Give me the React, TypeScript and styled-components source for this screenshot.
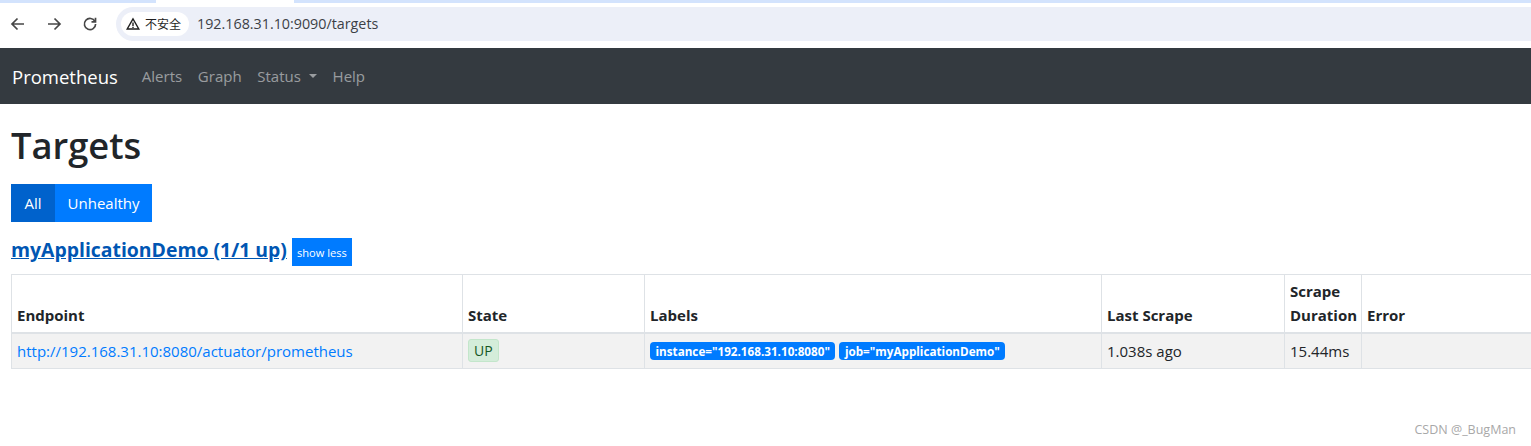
import React from "react";
import styled, { createGlobalStyle } from "styled-components";

const GlobalStyle = createGlobalStyle`
  html, body {
    margin: 0;
    padding: 0;
    background: #fff;
  }
  body {
    font-family: "Open Sans", "Noto Sans", "Liberation Sans", sans-serif;
    color: #212529;
    overflow: hidden;
  }
`;

const Page = styled.div`
  width: 1531px;
  height: 446px;
  overflow: hidden;
  position: relative;
`;

const TabStrip = styled.div`
  height: 3px;
  background: #d3e3fd;
  display: flex;
`;

const TabGap = styled.div`
  width: 138px;
  margin-left: 156px;
  background: #fff;
`;

const BrowserBar = styled.div`
  height: 45px;
  display: flex;
  align-items: center;
  box-sizing: border-box;
  padding: 0 0 4px 0;
  background: #fff;
`;

const NavIcon = styled.button`
  width: 36px;
  height: 30px;
  padding: 0;
  border: 0;
  background: none;
  display: flex;
  align-items: center;
  justify-content: center;
  color: #474747;
`;

const AddressBar = styled.div`
  flex: 1;
  height: 34px;
  margin-left: 8px;
  border-radius: 17px 0 0 17px;
  background: #eceff8;
  display: flex;
  align-items: center;
  padding-left: 5px;
`;

const SecurityChip = styled.div`
  height: 24px;
  width: 68px;
  box-sizing: border-box;
  padding-left: 5px;
  border-radius: 12px;
  background: #fff;
  display: flex;
  align-items: center;
  gap: 5px;
  font-family: "Noto Sans CJK SC", sans-serif;
  font-size: 12px;
  color: #1f1f1f;
`;

const Url = styled.span`
  margin-left: 8px;
  font-size: 14.3px;
  color: #3c3f46;
`;

const Navbar = styled.nav`
  height: 56px;
  background: #343a40;
  display: flex;
  align-items: center;
  padding-left: 12px;
`;

const Brand = styled.a`
  font-size: 18.5px;
  color: #fff;
  margin-right: 24px;
`;

const NavLinks = styled.div`
  display: flex;
  align-items: center;
  gap: 15.7px;
`;

const NavLink = styled.a`
  font-size: 15px;
  color: rgba(255, 255, 255, 0.5);
  display: flex;
  align-items: center;
`;

const Caret = styled.i`
  margin-left: 8px;
  width: 0;
  height: 0;
  border-top: 4px solid rgba(255, 255, 255, 0.5);
  border-left: 4px solid transparent;
  border-right: 4px solid transparent;
`;

const Main = styled.main`
  padding: 0 0 0 11px;
`;

const Title = styled.h1`
  margin: 16px 0 0;
  height: 64px;
  line-height: 50px;
  font-size: 36.3px;
  font-weight: 600;
  color: #212529;
`;

const FilterGroup = styled.div`
  display: flex;
  height: 38px;
`;

const FilterButton = styled.button<{ $active?: boolean }>`
  border: 0;
  padding: 0 ${(p) => (p.$active ? "13.5px" : "12.5px")};
  font: inherit;
  font-size: 15px;
  color: #fff;
  background: ${(p) => (p.$active ? "#0062cc" : "#007bff")};
`;

const PoolHead = styled.div`
  display: flex;
  align-items: center;
  height: 28px;
  margin-top: 16px;
`;

const PoolLink = styled.a`
  font-size: 19.4px;
  line-height: 24px;
  margin-top: -4px;
  font-weight: 700;
  color: #0056b3;
  text-decoration: underline;
`;

const ShowLess = styled.button`
  border: 0;
  margin-left: 5px;
  width: 60px;
  height: 28px;
  padding: 0;
  font: inherit;
  font-size: 11.1px;
  color: #fff;
  background: #007bff;
`;

const Table = styled.table`
  margin-top: 8px;
  width: 1530px;
  border-collapse: collapse;
  table-layout: fixed;
  font-size: 15px;
`;

const Th = styled.th<{ $w: number }>`
  width: ${(p) => p.$w}px;
  box-sizing: border-box;
  padding: 4px 5px 5px;
  border: 1px solid #dee2e6;
  border-bottom-width: 2px;
  text-align: left;
  vertical-align: bottom;
  font-size: 15px;
  line-height: 24px;
  font-weight: 700;
`;

const Td = styled.td`
  height: 35px;
  box-sizing: border-box;
  padding: 0 5px;
  border: 1px solid #dee2e6;
  background: #f2f2f2;
  line-height: 20px;
  vertical-align: middle;
`;

const EndpointLink = styled.a`
  color: #007bff;
`;

const StateBadge = styled.span`
  display: inline-block;
  box-sizing: border-box;
  height: 23px;
  line-height: 21px;
  padding: 0 5px;
  border: 1px solid #c3e6cb;
  border-radius: 3px;
  background: #d4edda;
  color: #155724;
  font-size: 14px;
`;

const LabelList = styled.div`
  display: flex;
  gap: 4px;
`;

const LabelBadge = styled.span`
  height: 18px;
  line-height: 18px;
  padding: 0 5.5px;
  border-radius: 4px;
  background: #007bff;
  color: #fff;
  font-size: 11.7px;
  font-weight: 700;
  white-space: nowrap;
`;

const Watermark = styled.span`
  position: absolute;
  right: 15px;
  top: 421px;
  font-size: 12.5px;
  color: #a8a8a8;
`;

export default function App() {
  return (
    <Page>
      <GlobalStyle />
      <TabStrip>
        <TabGap />
      </TabStrip>
      <BrowserBar>
        <NavIcon>
          <svg width="16" height="16" viewBox="0 0 16 16" fill="none" stroke="currentColor" strokeWidth="1.7">
            <path d="M14 8H2.5M7.5 2.5 2 8l5.5 5.5" />
          </svg>
        </NavIcon>
        <NavIcon>
          <svg width="16" height="16" viewBox="0 0 16 16" fill="none" stroke="currentColor" strokeWidth="1.7">
            <path d="M2 8h11.500M8.500 2.500 14 8l-5.500 5.500" />
          </svg>
        </NavIcon>
        <NavIcon>
          <svg width="16" height="16" viewBox="0 0 16 16" fill="none" stroke="currentColor" strokeWidth="1.7">
            <path d="M13 5.500A5.600 5.600 0 1 0 13.600 8" />
            <path d="M13.500 1.800v4h-4" />
          </svg>
        </NavIcon>
        <AddressBar>
          <SecurityChip>
            <svg width="14" height="14" viewBox="0 0 14 14" fill="none" stroke="currentColor" strokeWidth="1.400">
              <path d="M7 1.800 1.200 12h11.600Z" />
              <path d="M7 5.500v3.500M7 9.800v1.200" />
            </svg>
            不安全
          </SecurityChip>
          <Url>192.168.31.10:9090/targets</Url>
        </AddressBar>
      </BrowserBar>
      <Navbar>
        <Brand>Prometheus</Brand>
        <NavLinks>
          <NavLink>Alerts</NavLink>
          <NavLink>Graph</NavLink>
          <NavLink>
            Status
            <Caret />
          </NavLink>
          <NavLink>Help</NavLink>
        </NavLinks>
      </Navbar>
      <Main>
        <Title>Targets</Title>
        <FilterGroup>
          <FilterButton $active>All</FilterButton>
          <FilterButton>Unhealthy</FilterButton>
        </FilterGroup>
        <PoolHead>
          <PoolLink>myApplicationDemo (1/1 up)</PoolLink>
          <ShowLess>show less</ShowLess>
        </PoolHead>
        <Table>
          <thead>
            <tr>
              <Th $w={451}>Endpoint</Th>
              <Th $w={182}>State</Th>
              <Th $w={457}>Labels</Th>
              <Th $w={183}>Last Scrape</Th>
              <Th $w={77}>Scrape Duration</Th>
              <Th $w={180}>Error</Th>
            </tr>
          </thead>
          <tbody>
            <tr>
              <Td>
                <EndpointLink>http://192.168.31.10:8080/actuator/prometheus</EndpointLink>
              </Td>
              <Td>
                <StateBadge>UP</StateBadge>
              </Td>
              <Td>
                <LabelList>
                  <LabelBadge>instance="192.168.31.10:8080"</LabelBadge>
                  <LabelBadge>job="myApplicationDemo"</LabelBadge>
                </LabelList>
              </Td>
              <Td>1.038s ago</Td>
              <Td>15.44ms</Td>
              <Td />
            </tr>
          </tbody>
        </Table>
      </Main>
      <Watermark>CSDN @_BugMan</Watermark>
    </Page>
  );
}
